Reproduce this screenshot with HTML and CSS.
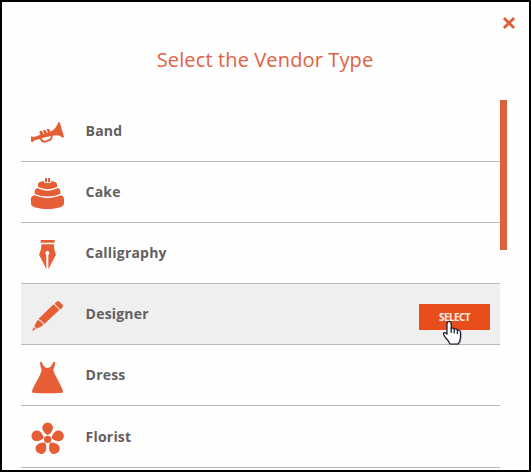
FILE: index.html
```html
<!DOCTYPE html>
<html lang="en">
<head>
<meta charset="utf-8">
<title>Select the Vendor Type</title>
<link rel="stylesheet" href="styles.css">
</head>
<body>
<main class="dialog">
  <header class="dialog-header">
    <button class="close" aria-label="Close"><svg width="14" height="14" viewBox="0 0 14 14"><path d="M1.9 2.1 12.1 11.9M12.1 2.1 1.9 11.9"/></svg></button>
    <h1>Select the Vendor Type</h1>
  </header>
  <div class="scroller">
    <ul class="vendors">
      <li class="vendor">
        <svg class="icon" viewBox="3 -27 180 180"><path d="M33 79 42 81 61 74 58 65 61 62 67 64 70 73 73 72 69 62 73 59 78 62 81 69 84 68 80 58 84 56 89 59 92 65Q109 56 115 37L119 37 132 80 129 83Q115 73 98 77Q99 89 87 94L73 98Q63 98 60 87L44 91 37 97 33 94ZM65 85Q68 94 75 92L86 88Q94 85 92 78Z" fill-rule="evenodd"/></svg>
        <span>Band</span>
      </li>
      <li class="vendor">
        <svg class="icon" viewBox="3 -24 180 180"><path d="M75 24h6v13h-6zM84 24h6v13h-6z"/><path d="M54 42Q55 35 72 33V39H93V33Q110 35 111 42V51Q83 64 54 51Z"/><path d="M52 54Q83 70 114 54Q121 57 121 62V72Q83 87 44 72V62Q44 57 52 54Z"/><path d="M43 76Q83 93 123 76Q132 79 132 86V103C127 122 38 122 33 103V86Q33 79 43 76Z"/></svg>
        <span>Cake</span>
      </li>
      <li class="vendor">
        <svg class="icon" viewBox="3 -21 180 180"><path d="M62 30h42v8H62z"/><path d="M64 43H102Q101 57 108 74Q99 90 85 118V75Q88 73 88 69A6 6 0 0 0 76 69Q76 73 79 75V118Q66 90 57 74Q65 57 64 43Z"/></svg>
        <span>Calligraphy</span>
      </li>
      <li class="vendor active">
        <svg class="icon" viewBox="3 -18 180 180"><path d="M107 37Q112 32 117 34L129 46Q130 51 124 56L120 58 104 42Z"/><path d="M101 43 118 60 72 103Q68 92 55 87Z"/><path d="M53 90Q66 94 70 106L50 116 43 108ZM42 111 47 118 36 123Z"/></svg>
        <span>Designer</span>
        <button class="select">SELECT</button>
        <svg class="cursor" width="22" height="28" viewBox="0 0 22 28"><path class="shadow" d="M8.2 3.5Q10.5 3.2 10.5 6V9.5Q12.5 8.5 13.5 10Q15.5 9 16.5 11Q19.7 10.5 19.7 13.5V18Q19.7 22 17 25H9Q6 21 3.5 18Q2 14 6 15.5V6Q6 3.5 8.2 3.5Z"/><path class="hand" d="M7 1.5Q9.2 1.5 9.2 4V8.5Q11.3 7.2 12.2 9.2Q14.6 8 15.4 10.2Q18.5 9.7 18.5 12.8V17Q18.5 21 16 24H8Q6.5 20.5 3 17Q.6 13.5 2 12.9Q3.8 12.2 5 14.5V4Q5 1.5 7 1.5Z"/><path class="finger" d="M9.2 8.5V13M12.2 9.2V13.4M15.4 10.2V14"/></svg>
      </li>
      <li class="vendor">
        <svg class="icon" viewBox="3 -15 180 180"><path d="M60 37 65 35Q70 53 82 54Q95 53 100 35L106 37Q105 48 100 60Q102 69 112 87Q121 103 129 122L128 128Q83 131 37 128L36 122Q44 103 54 87Q63 70 65 60Q60 48 60 37Z"/></svg>
        <span>Dress</span>
      </li>
      <li class="vendor">
        <svg class="icon" viewBox="3 -27 180 180"><circle cx="83" cy="73" r="11"/><path id="petal" d="M83 60C79 60 67 48 67 39C67 29 74 23 83 23S99 29 99 39C99 48 87 60 83 60Z"/><use href="#petal" transform="rotate(72 83 73)"/><use href="#petal" transform="rotate(144 83 73)"/><use href="#petal" transform="rotate(216 83 73)"/><use href="#petal" transform="rotate(288 83 73)"/></svg>
        <span>Florist</span>
      </li>
    </ul>
    <div class="scrollbar"></div>
  </div>
</main>
</body>
</html>
```

FILE: styles.css
```css
* { box-sizing: border-box; }
body { margin: 0; font-family: "Open Sans", "Noto Sans", sans-serif; }
.dialog {
  width: 531px;
  height: 472px;
  border: 2px solid #000;
  background: #fefefe;
  overflow: hidden;
}
.dialog-header {
  height: 98px;
  padding-top: 14px;
  display: flex;
  flex-direction: column;
}
.close {
  align-self: flex-end;
  width: 14px;
  height: 14px;
  margin-right: 13px;
  padding: 0;
  border: 0;
  background: none;
}
.close svg { display: block; }
.close path { stroke: #e25c35; stroke-width: 2.8; }
h1 {
  margin: 14px 0 0;
  padding-right: 1px;
  color: #df6242;
  font-size: 20px;
  font-weight: 400;
  line-height: 32px;
  text-align: center;
  letter-spacing: 0.13px;
}
.scroller { display: flex; padding-left: 19px; }
.vendors { width: 479px; margin: 0; padding: 1px 0 0; list-style: none; }
.vendor {
  position: relative;
  display: flex;
  align-items: flex-start;
  height: 61px;
  border-bottom: 1px solid #b9b9bb;
  color: #626061;
  font-size: 14px;
  font-weight: 700;
  line-height: 60px;
}
.vendor:last-child { height: 62px; line-height: 62px; }
.vendor span { margin-left: 4.6px; letter-spacing: 0.2px; }
.active { background: #efefef; }
.icon { width: 60px; height: 60px; fill: #e65e35; }
.select {
  width: 71px;
  height: 26px;
  margin: 20px 10px 0 auto;
  padding: 0;
  border: 0;
  background: #e84e1b;
  color: #fff1e8;
  font: 700 10px/26px "Open Sans", sans-serif;
  letter-spacing: -0.6px;
}
.cursor { position: absolute; left: 421px; top: 36px; }
.shadow { fill: #777; opacity: .45; }
.hand { fill: #fff; stroke: #15172b; stroke-width: 1.2; }
.finger { fill: none; stroke: #15172b; stroke-width: 1.2; }
.scrollbar { width: 7px; height: 150px; background: #e65e35; border: 1px solid #cf6040; }
```
